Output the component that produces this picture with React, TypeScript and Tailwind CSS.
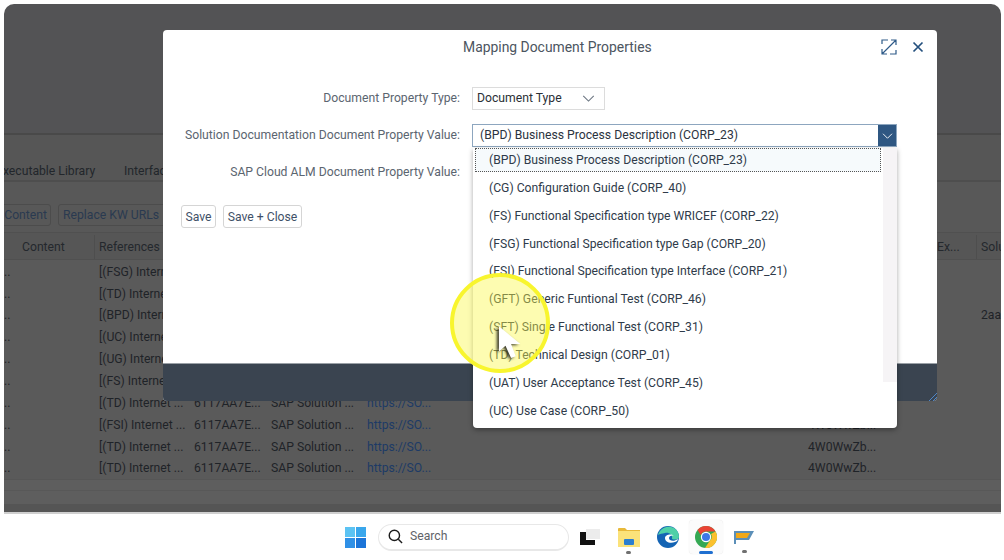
const rows: [string, string][] = [
  ["[(FSG) Internet ...", ""],
  ["[(TD) Internet ...", ""],
  ["[(BPD) Internet ...", "2aa7"],
  ["[(UC) Internet ...", ""],
  ["[(UG) Internet ...", ""],
  ["[(FS) Internet ...", ""],
  ["[(TD) Internet ...", ""],
  ["[(FSI) Internet ...", ""],
  ["[(TD) Internet ...", ""],
  ["[(TD) Internet ...", ""],
];

const options = [
  "(BPD) Business Process Description (CORP_23)",
  "(CG) Configuration Guide (CORP_40)",
  "(FS) Functional Specification type WRICEF (CORP_22)",
  "(FSG) Functional Specification type Gap (CORP_20)",
  "(FSI) Functional Specification type Interface (CORP_21)",
  "(GFT) Generic Funtional Test (CORP_46)",
  "(SFT) Single Functional Test (CORP_31)",
  "(TD) Technical Design (CORP_01)",
  "(UAT) User Acceptance Test (CORP_45)",
  "(UC) Use Case (CORP_50)",
];

const grid = "grid grid-cols-[14px_77px_95px_77px_96px_441px_129px_44px_40px]";

function Chevron({ className }: { className: string }) {
  return (
    <svg viewBox="0 0 14 8" className={className} fill="none" stroke="currentColor" strokeWidth="1.2">
      <path d="M1 1l6 6 6-6" />
    </svg>
  );
}

function Backdrop() {
  return (
    <div className="flex h-full flex-col">
      <div className="h-[131px] shrink-0 border-b-2 border-[#494949] bg-[#535355]" />
      <div className="flex h-[47px] shrink-0 items-end gap-[28px] border-b-2 border-[#4e4e4e] bg-[#565656] text-[#22262b]">
        <span className="ml-[-8px] w-[100px]">Executable Library</span>
        <span>Interface</span>
      </div>
      <div className="flex h-[50px] shrink-0 items-center gap-[7px] bg-[#585858] pt-[16px] text-[#2a3a50]">
        <span className="ml-[-40px] flex h-[22px] w-[87px] items-center justify-end rounded-[3px] border border-[#4c4c4c] px-[3px]">Content</span>
        <span className="flex h-[22px] w-[120px] items-center rounded-[3px] border border-[#4c4c4c] px-[4px]">Replace KW URLs</span>
      </div>
      <div className={`${grid} h-[28px] shrink-0 items-center border-y border-[#505050] bg-[#565656] pt-[2px] text-[#24282d]`}>
        <span />
        <span className="h-full border-r border-[#4e4e4e] pl-[4px] leading-[24px]">Content</span>
        <span className="pl-[4px]">References</span>
        <span />
        <span />
        <span />
        <span />
        <span className="h-full border-r border-[#4e4e4e] pl-[4px] leading-[24px]">Ex...</span>
        <span className="pl-[4px]">Solu</span>
      </div>
      <div className="shrink-0 bg-[#5a5a5a] pt-[1px]">
        {rows.map(([ref, last], i) => (
          <div key={i} className={`${grid} h-[21.85px] items-center text-[#1f2328]`}>
            <span>..</span>
            <span />
            <span className="truncate pl-[4px]">{ref}</span>
            <span className="pl-[4px]">6117AA7E...</span>
            <span className="pl-[4px]">SAP Solution ...</span>
            <span className="pl-[4px] text-[#1d3a66]">https://SO...</span>
            <span className="pl-[4px]">4W0WwZb...</span>
            <span />
            <span className="overflow-hidden pl-[4px]">{last}</span>
          </div>
        ))}
      </div>
      <div className="h-[11px] shrink-0 border-t border-[#565656] bg-[#5e5e5e]" />
      <div className="h-[14px] shrink-0 border-t border-[#585858] bg-[#5e5e5e]" />
      <div className="flex-1 border-t border-[#555555] bg-[#555555]" />
    </div>
  );
}

function Dropdown() {
  return (
    <div className="absolute left-[310px] top-[118px] z-10 flex h-[280px] w-[424px] rounded-b-[4px] bg-white shadow-[0_2px_5px_rgba(0,0,0,0.35)]">
      <div className="w-[410px] pl-[2px]">
        {options.map((o, i) => (
          <div
            key={o}
            className={
              i === 0
                ? "mb-[2px] flex h-[24px] w-[406px] items-center border border-dotted border-[#555555] bg-[#f6fafc] pl-[13px] text-[#2f3b4a]"
                : "flex h-[27.9px] items-center pl-[14px] text-[#2f3b4a]"
            }
          >
            {o}
          </div>
        ))}
      </div>
      <div className="h-[234px] w-[14px] bg-[#f6f4f6]" />
    </div>
  );
}

function Modal() {
  return (
    <div className="absolute left-[159px] top-[26px] flex h-[371px] w-[774px] flex-col rounded-[4px] bg-white whitespace-nowrap">
      <div className="flex h-[34px] shrink-0 items-center pl-[300px] text-[13.9px] text-[#4c5560]">
        <span className="w-[188px]">Mapping Document Properties</span>
        <svg viewBox="0 0 16 16" className="ml-[230px] h-[16px] w-[16px] text-[#2e5a88]" fill="none" stroke="currentColor" strokeWidth="1.2">
          <path d="M1 5V1h6M15 11v4H9M1 15l14-14M10 1h5v5M1 10v5h5" />
        </svg>
        <svg viewBox="0 0 12 12" className="ml-[15px] h-[12px] w-[12px] text-[#24507e]" fill="none" stroke="currentColor" strokeWidth="1.7">
          <path d="M1.5 1.5l9 9M10.5 1.5l-9 9" />
        </svg>
      </div>
      <div className="flex flex-1 flex-col pt-[22px] text-[#5b6570]">
        <div className="flex h-[24px] items-center pt-[1px]">
          <span className="w-[297px] text-right">Document Property Type:</span>
          <div className="ml-[12px] flex h-[23px] w-[133px] items-center justify-between border border-[#dcdcdc] pl-[4px] pr-[9px] text-[#2b2f36]">
            Document Type
            <Chevron className="h-[7px] w-[13px] text-[#6a7480]" />
          </div>
        </div>
        <div className="mt-[13px] flex h-[24px] items-center pt-[1px]">
          <span className="w-[297px] text-right">Solution Documentation Document Property Value:</span>
          <div className="ml-[12px] flex h-[23px] w-[425px] items-center justify-between border border-[#8da6bf] pl-[7px] text-[#2b3340]">
            (BPD) Business Process Description (CORP_23)
            <span className="flex h-full w-[18px] items-center justify-center bg-[#2f5782] text-white">
              <Chevron className="h-[6px] w-[11px]" />
            </span>
          </div>
        </div>
        <div className="mt-[13px] flex h-[24px] items-center pt-[1px]">
          <span className="w-[297px] text-right">SAP Cloud ALM Document Property Value:</span>
        </div>
        <div className="mt-[21px] flex gap-[7px] pl-[18px] text-[#3f5168]">
          <span className="flex h-[23px] w-[35px] items-center justify-center rounded-[3px] border border-[#d5d5d5] pt-[1px]">Save</span>
          <span className="flex h-[23px] w-[79px] items-center justify-center rounded-[3px] border border-[#d5d5d5] pt-[1px]">Save + Close</span>
        </div>
      </div>
      <div className="flex h-[38px] shrink-0 items-end justify-end rounded-b-[4px] border-t border-[#9aa0a6] bg-[#3a4450]">
        <svg viewBox="0 0 8 8" className="h-[8px] w-[8px] text-[#4f86c6]" fill="none" stroke="currentColor" strokeWidth="1">
          <path d="M0 8l8-8M4 8l4-4" />
        </svg>
      </div>
      <Dropdown />
    </div>
  );
}

function CursorHighlight() {
  return (
    <div className="absolute left-[446px] top-[269px] z-20 h-[100px] w-[100px] rounded-full border-[4px] border-[#f8f52e] bg-[rgba(250,248,70,0.42)]">
      <svg viewBox="0 0 30 40" className="absolute left-[44px] top-[48px] h-[38px] w-[28px] drop-shadow-[-2px_1px_1.5px_rgba(0,0,0,0.8)]">
        <path d="M1 1v27l7-6 6 13 5-2-5-13h10z" fill="#ffffff" />
      </svg>
    </div>
  );
}

function Taskbar() {
  return (
    <div className="flex h-[46px] items-center bg-white pl-[345px]">
      <svg viewBox="0 0 21 21" className="h-[21px] w-[21px]">
        <rect x="0" y="0" width="10" height="10" fill="#5cc3f3" />
        <rect x="11" y="0" width="10" height="10" fill="#3aa7ec" />
        <rect x="0" y="11" width="10" height="10" fill="#2f90e6" />
        <rect x="11" y="11" width="10" height="10" fill="#1b74d8" />
      </svg>
      <div className="ml-[12px] flex h-[27px] w-[191px] items-center rounded-full border border-b-2 border-[#e8e8e8] pl-[9px] text-[#5f6368]">
        <svg viewBox="0 0 16 16" className="h-[15px] w-[15px] text-[#1c1c1c]" fill="none" stroke="currentColor" strokeWidth="1.5">
          <circle cx="6.8" cy="6.8" r="5.5" />
          <path d="M11 11l4 4" />
        </svg>
        <span className="ml-[7px]">Search</span>
      </div>
      <svg viewBox="0 0 20 16" className="ml-[11px] h-[16px] w-[20px]">
        <rect x="6" y="0" width="14" height="10" fill="#ececec" />
        <path d="M0 3h6v8h9v5H0z" fill="#111111" />
      </svg>
      <div className="relative ml-[18px] h-[20px] w-[22px]">
        <svg viewBox="0 0 22 20" className="h-[20px] w-[22px]">
          <path d="M0 2a1 1 0 011-1h6l2 2h13v16H0z" fill="#e8b93a" />
          <rect x="0" y="4" width="22" height="16" fill="#fbe27a" />
          <rect x="6" y="12" width="10" height="6" rx="1" fill="#2c7fd0" />
        </svg>
        <span className="absolute left-[8px] top-[24px] h-[3px] w-[5px] rounded-full bg-[#707070]" />
      </div>
      <svg viewBox="0 0 22 22" className="ml-[17px] h-[22px] w-[22px]">
        <circle cx="11" cy="11" r="11" fill="#1464b4" />
        <path d="M1 9C3 2 10 0 14 1c5 1 8 5 8 10 0 3-5 3-7 2 1-4-3-7-7-6-3 .5-5 1-7 2z" fill="#4fd0a8" />
        <path d="M8 12c0 4 5 6 10 4 2-.6 3-2 3-3-4 3-9 2-9-1 0-2 3-3 5-2-3-3-9-1-9 2z" fill="#ffffff" />
      </svg>
      <div className="relative ml-[10px] flex h-[34px] w-[34px] items-center justify-center rounded-[4px] bg-[#fbfbfb] shadow-[0_0_1px_rgba(0,0,0,0.15)]">
        <svg viewBox="0 0 22 22" className="h-[22px] w-[22px]">
          <circle cx="11" cy="11" r="11" fill="#34a853" />
          <path d="M11 0a11 11 0 019.5 5.5H11a5.5 5.5 0 00-5.2 3.7L2.6 4A11 11 0 0111 0z" fill="#ea4335" />
          <path d="M20.5 5.5A11 11 0 0110 22l4.8-7.2A5.5 5.5 0 0016 8z" fill="#fbc02d" />
          <circle cx="11" cy="11" r="5.2" fill="#ffffff" />
          <circle cx="11" cy="11" r="4" fill="#3b78e7" />
        </svg>
        <span className="absolute bottom-0 left-[10px] h-[3px] w-[14px] rounded-full bg-[#1f6fd0]" />
      </div>
      <div className="relative ml-[11px] h-[14px] w-[20px]">
        <svg viewBox="0 0 20 14" className="h-[14px] w-[20px]">
          <path d="M0 1h20l-5 9H2v4H0z" fill="#5b8fb8" />
          <path d="M2 3h14l-3 5H2z" fill="#f0a818" />
        </svg>
        <span className="absolute left-[8px] top-[20px] h-[3px] w-[5px] rounded-full bg-[#707070]" />
      </div>
    </div>
  );
}

export default function App() {
  return (
    <div className="h-[560px] w-[1004px] overflow-hidden bg-white pt-[4px] font-['Roboto',sans-serif] text-[12.2px]">
      <div className="relative ml-[4px] h-[510px] w-[997px] rounded-t-[10px]">
        <div className="h-full overflow-hidden rounded-t-[10px] border-b-2 border-[#cfcfcf] whitespace-nowrap">
          <Backdrop />
        </div>
        <Modal />
        <CursorHighlight />
      </div>
      <Taskbar />
    </div>
  );
}
